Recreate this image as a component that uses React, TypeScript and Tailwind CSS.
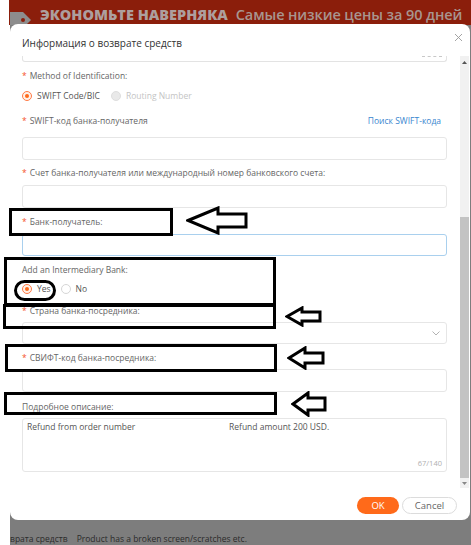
import React from "react";

const Label = ({ children, req = true, className = "" }: { children: React.ReactNode; req?: boolean; className?: string }) => (
  <div className={`h-[14px] flex items-center text-[8.5px] leading-[14px] text-[#666] whitespace-nowrap ${className}`}>
    {req && <span className="text-[#f5512b] mr-[3px]">*</span>}
    <span>{children}</span>
  </div>
);

const Input = ({ className = "" }: { className?: string }) => (
  <div className={`bg-white border border-[#e6e6e6] rounded-[3px] ${className}`} />
);

const RadioOn = ({ className = "" }: { className?: string }) => (
  <div className={`w-[10px] h-[10px] rounded-full border border-[#ff7a45] bg-[#fff1e8] flex items-center justify-center shrink-0 ${className}`}>
    <div className="w-[4px] h-[4px] rounded-full bg-[#ff6a1a]" />
  </div>
);
const RadioDisabled = ({ className = "" }: { className?: string }) => (
  <div className={`w-[10px] h-[10px] rounded-full border border-[#dedede] bg-[#e9e9e9] shrink-0 ${className}`} />
);
const RadioOff = ({ className = "" }: { className?: string }) => (
  <div className={`w-[10px] h-[10px] rounded-full border border-[#d6d6d6] bg-white shrink-0 ${className}`} />
);

const Arrow = ({ left, top, w, h, hb, s1, s2 }: { left: number; top: number; w: number; h: number; hb: number; s1: number; s2: number }) => (
  <svg
    className="absolute"
    style={{ left: left - 2, top: top - 2 }}
    width={w + 4}
    height={h + 4}
    viewBox={`-2 -2 ${w + 4} ${h + 4}`}
  >
    <polygon
      points={`0,${h / 2} ${hb},0 ${hb},${s1} ${w},${s1} ${w},${s2} ${hb},${s2} ${hb},${h}`}
      fill="white"
      stroke="black"
      strokeWidth={3}
      strokeLinejoin="miter"
    />
  </svg>
);

export default function App() {
  return (
    <div className="w-[471px] h-[545px] relative overflow-hidden bg-white font-['Open_Sans',sans-serif] flex flex-col">
      {/* background page */}
      <div className="ml-[9px] h-[25px] bg-[#8b1e0b] flex items-start pt-[6px] overflow-hidden whitespace-nowrap">
        <svg width="22" height="18" viewBox="0 0 22 18" className="mt-[3px] ml-[1px] shrink-0">
          <path d="M0 3 L13 3 L21 11 L13 19 L0 19 Z" fill="#8d8d8d" />
          <circle cx="13" cy="11" r="2" fill="#8b1e0b" />
        </svg>
        <span className="ml-[8px] text-[14.5px] leading-[17px] font-extrabold text-[#ad9f9e]">ЭКОНОМЬТЕ НАВЕРНЯКА</span>
        <span className="ml-[8px] text-[14.5px] leading-[17px] font-semibold text-[#a8958f] tracking-[-0.1px]">Самые низкие цены за 90 дней</span>
      </div>
      <div className="flex-1 ml-[10px] bg-[#7d7d7d]" />
      <div className="h-[25px] ml-[10px] bg-[#7d7d7d] pt-[13px] text-[8.5px] leading-[12px] text-[#2b2b2b] whitespace-nowrap overflow-hidden">
        <span>врата средств</span>
        <span className="ml-[9px]">Product has a broken screen/scratches etc.</span>
      </div>

      {/* modal */}
      <div className="absolute left-[10px] top-[24px] w-[460px] h-[496px] bg-white rounded-[8px] flex flex-col">
        <div className="h-[32px] relative pl-[12px] pt-[11px]">
          <div className="text-[10px] leading-[16px] text-[#333]">Информация о возврате средств</div>
          <svg className="absolute left-[444px] top-[9px]" width="9" height="9" viewBox="0 0 9 9">
            <path d="M1 1 L8 8 M8 1 L1 8" stroke="#9a9a9a" strokeWidth="0.9" />
          </svg>
        </div>

        <div className="h-[432px] flex">
          <div className="w-[450px] pl-[12px] pr-[13px] overflow-hidden flex flex-col">
            <div className="h-[6px] shrink-0 border border-t-0 border-[#e3e3e3] rounded-b-[3px] relative overflow-hidden">
              <div className="absolute right-[4px] top-0 w-[20px] h-[1px] border-t border-dashed border-[#c8c8c8]" />
            </div>

            <Label className="mt-[7px]">Method of Identification:</Label>

            <div className="mt-[6px] h-[14px] flex items-center text-[8.5px] leading-[14px] whitespace-nowrap">
              <RadioOn />
              <span className="ml-[5px] text-[#555]">SWIFT Code/BIC</span>
              <RadioDisabled className="ml-[11px]" />
              <span className="ml-[5px] text-[#c4c4c4]">Routing Number</span>
            </div>

            <div className="mt-[11px] h-[14px] flex items-center justify-between">
              <Label>SWIFT-код банка-получателя</Label>
              <span className="text-[8.5px] leading-[14px] text-[#3a86cf] mr-[6px]">Поиск SWIFT-кода</span>
            </div>
            <Input className="mt-[9px] h-[23px]" />

            <Label className="mt-[6px]">Счет банка-получателя или международный номер банковского счета:</Label>
            <Input className="mt-[5px] h-[23px]" />

            <Label className="mt-[7px]">Банк-получатель:</Label>
            <div className="mt-[5px] h-[22px] bg-white border border-[#a9d0ee] rounded-[3px]" />

            <Label className="mt-[7px]" req={false}>Add an Intermediary Bank:</Label>
            <div className="mt-[5px] h-[14px] flex items-center text-[8.5px] leading-[14px]">
              <RadioOn />
              <span className="ml-[5px] text-[#555]">Yes</span>
              <RadioOff className="ml-[10px]" />
              <span className="ml-[5px] text-[#555]">No</span>
            </div>

            <Label className="mt-[8px]">Страна банка-посредника:</Label>
            <div className="mt-[4px] h-[22px] bg-white border border-[#e6e6e6] rounded-[3px] flex items-center justify-end pr-[6px]">
              <svg width="8" height="5" viewBox="0 0 8 5">
                <path d="M0.5 0.5 L4 4 L7.5 0.5" stroke="#aaa" strokeWidth="0.9" fill="none" />
              </svg>
            </div>

            <Label className="mt-[7px]">СВИФТ-код банка-посредника:</Label>
            <Input className="mt-[4px] h-[23px]" />

            <Label className="mt-[8px]" req={false}>Подробное описание:</Label>
            <div className="mt-[4px] h-[54px] bg-white border border-[#e6e6e6] rounded-[3px] relative text-[8.5px] leading-[12px] text-[#555]">
              <div className="flex pl-[4px] pt-[2px] whitespace-nowrap">
                <span className="w-[202px]">Refund from order number</span>
                <span>Refund amount 200 USD.</span>
              </div>
              <div className="absolute right-[4px] bottom-[3px] text-[7.5px] leading-[10px] text-[#b0b0b0]">67/140</div>
            </div>
          </div>

          {/* scrollbar */}
          <div className="w-[9px] flex flex-col bg-[#f1f1f1]">
            <div className="h-[12px] flex items-center justify-center">
              <svg width="5" height="3" viewBox="0 0 5 3"><path d="M0 3 L2.5 0 L5 3 Z" fill="#555" /></svg>
            </div>
            <div className="h-[149px]" />
            <div className="h-[261px] bg-[#c3c3c3]" />
            <div className="h-[10px] flex items-center justify-center">
              <svg width="5" height="3" viewBox="0 0 5 3"><path d="M0 0 L2.5 3 L5 0 Z" fill="#888" /></svg>
            </div>
          </div>
        </div>

        <div className="h-[32px] flex justify-end items-start pt-[9px] pr-[13px] gap-[3px]">
          <button className="w-[42px] h-[17px] rounded-full bg-[#ff6a1a] text-white text-[9.5px] leading-[17px]">OK</button>
          <button className="w-[55px] h-[17px] rounded-full border border-[#dcdcdc] bg-white text-[#666] text-[9.5px] leading-[15px]">Cancel</button>
        </div>
      </div>

      {/* annotations */}
      <div className="absolute left-[9px] top-[208px] w-[164px] h-[28px] border-[3px] border-black" />
      <Arrow left={188} top={208} w={58} h={25} hb={30} s1={6} s2={19} />
      <div className="absolute left-[4px] top-[257px] w-[272px] h-[49px] border-[3px] border-black" />
      <div className="absolute left-[14px] top-[280px] w-[42px] h-[21px] border-[3px] border-black rounded-full" />
      <div className="absolute left-[3px] top-[304px] w-[273px] h-[25px] border-[3px] border-black" />
      <Arrow left={287} top={308} w={33} h={17} hb={15} s1={4} s2={13} />
      <div className="absolute left-[5px] top-[344px] w-[272px] h-[28px] border-[3px] border-black" />
      <Arrow left={289} top={348} w={34} h={20} hb={16} s1={5} s2={15} />
      <div className="absolute left-[4px] top-[392px] w-[273px] h-[23px] border-[3px] border-black" />
      <Arrow left={293} top={393} w={32} h={22} hb={15} s1={5} s2={17} />
    </div>
  );
}
